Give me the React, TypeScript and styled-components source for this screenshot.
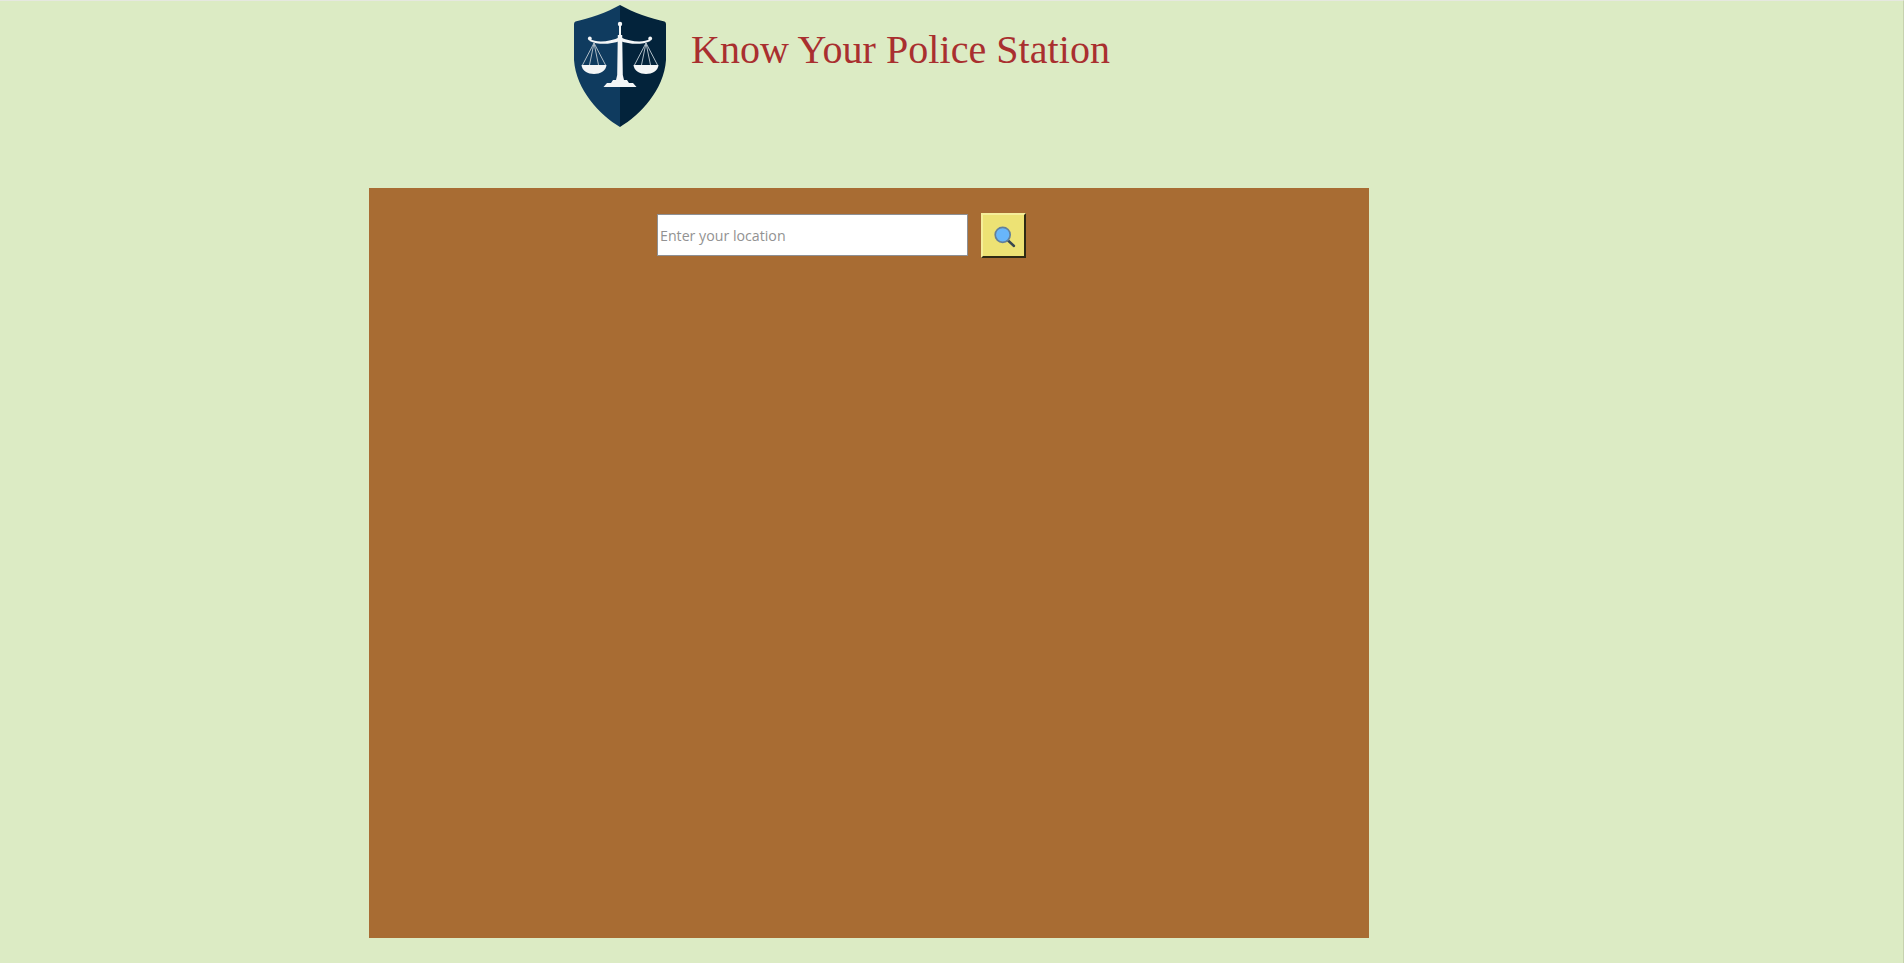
import React from 'react';
import styled, { createGlobalStyle } from 'styled-components';

const GlobalStyle = createGlobalStyle`
  html, body {
    margin: 0;
    padding: 0;
    height: 100%;
    background: #dcebc4;
  }
  #root {
    height: 100%;
  }
`;

const Page = styled.div`
  box-sizing: border-box;
  width: 1904px;
  height: 963px;
  overflow: hidden;
  border-top: 1px solid #e6e8e0;
  border-right: 1px solid #c6d2ae;
  background: #dcebc4;
`;

const Header = styled.header`
  display: flex;
  align-items: flex-start;
  height: 187px;
  padding: 4px 0 0 574px;
  box-sizing: border-box;
`;

const Title = styled.h1`
  margin: 22px 0 0 25px;
  font-family: 'Liberation Serif', 'Times New Roman', serif;
  font-size: 40px;
  line-height: 46px;
  font-weight: 400;
  letter-spacing: 0.05px;
  color: #a92f2f;
`;

const Panel = styled.main`
  box-sizing: border-box;
  width: 1000px;
  height: 750px;
  margin-left: 369px;
  padding-top: 25px;
  background: #a86c33;
`;

const SearchRow = styled.form`
  display: flex;
  align-items: flex-start;
  gap: 13px;
  margin: 0 0 0 288px;
`;

const SearchInput = styled.input`
  box-sizing: border-box;
  width: 311px;
  height: 42px;
  margin-top: 1px;
  padding: 0 2px;
  border: 1px solid #8e9094;
  border-radius: 0;
  outline: none;
  background: #fff;
  font-family: 'Open Sans', 'Noto Sans', sans-serif;
  font-size: 14.2px;

  &::placeholder {
    color: #929292;
    opacity: 1;
  }
`;

const SearchButton = styled.button`
  box-sizing: border-box;
  display: flex;
  align-items: center;
  justify-content: center;
  width: 45px;
  height: 45px;
  padding: 0;
  border-style: solid;
  border-width: 2px;
  border-color: #f5ee9a #2e2a14 #2e2a14 #f5ee9a;
  background: #ede274;
`;

const Logo = () => (
  <svg width="92" height="122" viewBox="0 0 92 122" aria-label="Scales of justice shield logo">
    <path d="M46 0 C34 7 14 14 1.5 16.5 Q0 17 0 19 L0 55 C2 85 26 110 46 122 Z" fill="#0f3b5f" />
    <path d="M46 0 C58 7 78 14 90.5 16.5 Q92 17 92 19 L92 55 C90 85 66 110 46 122 Z" fill="#03233b" />
    <g fill="none" stroke="#aebcc6" strokeWidth="1">
      <path d="M20 38 L8.5 60 M20 38 L15.5 60 M20 38 L24.5 60 M20 38 L31.5 60" />
      <path d="M72 38 L60.5 60 M72 38 L67.5 60 M72 38 L76.5 60 M72 38 L83.5 60" />
    </g>
    <g fill="#f4f6f7" stroke="none">
      <circle cx="46" cy="19" r="2.2" />
      <rect x="45" y="19" width="2" height="12" />
      <path d="M43.8 30 H48.2 L48.8 70 L50 75 H42 L43.2 70 Z" />
      <path d="M39 75 H53 L55 78 H37 Z" />
      <path d="M33 78 H59 L62.5 82 H29.5 Z" />
      <path d="M16 34 C22 38 36 37 46 32 C56 37 70 38 76 34 L76.5 36 C68 40 56 39.5 46 36 C36 39.5 24 40 15.5 36 Z" />
      <circle cx="15.8" cy="33.5" r="1.9" />
      <circle cx="76.2" cy="33.5" r="1.9" />
      <path d="M7.5 60 H32.5 C32 66 26 69 20 69 C14 69 8 66 7.5 60 Z" />
      <path d="M59.5 60 H84.5 C84 66 78 69 72 69 C66 69 60 66 59.5 60 Z" />
    </g>
  </svg>
);

const SearchIcon = () => (
  <svg width="24" height="24" viewBox="0 0 24 24" aria-hidden="true">
    <path d="M15 15.5 L22 22" stroke="#3a4850" strokeWidth="2.4" strokeLinecap="round" />
    <circle cx="10.7" cy="10.8" r="7.5" fill="#68b6fa" stroke="#64809a" strokeWidth="1.7" />
  </svg>
);

export default function App() {
  return (
    <Page>
      <GlobalStyle />
      <Header>
        <Logo />
        <Title>Know Your Police Station</Title>
      </Header>
      <Panel>
        <SearchRow onSubmit={(e) => e.preventDefault()}>
          <SearchInput type="text" placeholder="Enter your location" />
          <SearchButton type="submit" aria-label="Search">
            <SearchIcon />
          </SearchButton>
        </SearchRow>
      </Panel>
    </Page>
  );
}
